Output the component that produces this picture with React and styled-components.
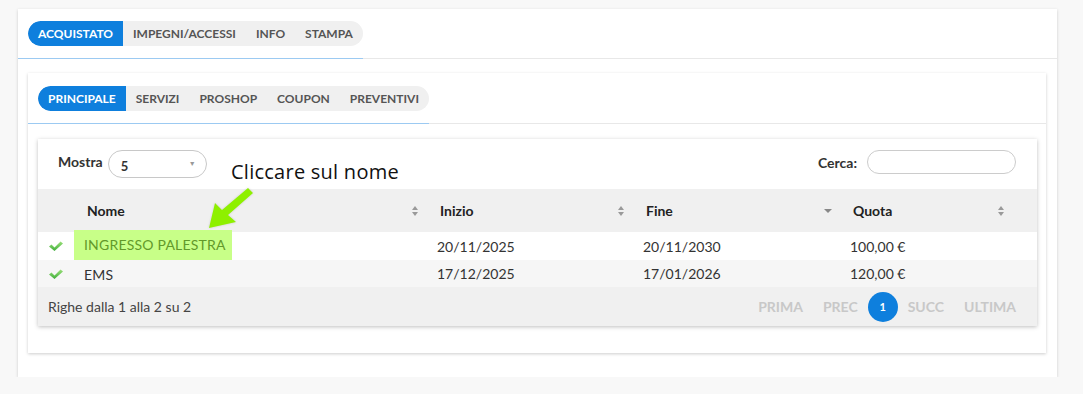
import React from 'react';
import styled, { createGlobalStyle } from 'styled-components';

const GlobalStyle = createGlobalStyle`
  body {
    margin: 0;
    background: #f8f8f8;
    font-family: Lato, "Open Sans", sans-serif;
    color: #333;
  }
`;

const rows = [
  { nome: 'INGRESSO PALESTRA', inizio: '20/11/2025', fine: '20/11/2030', quota: '100,00 €', hl: true },
  { nome: 'EMS', inizio: '17/12/2025', fine: '17/01/2026', quota: '120,00 €' },
];

function SortIcon({ dir }) {
  if (dir === 'desc') {
    return (
      <svg width="8" height="8" viewBox="0 0 8 8">
        <path d="M0 2h8L4 6z" fill="#888" />
      </svg>
    );
  }
  return (
    <svg width="8" height="12" viewBox="0 0 8 12">
      <path d="M1 5L4 1l3 4z" fill="#999" />
      <path d="M1 7l3 4 3-4z" fill="#999" />
    </svg>
  );
}

function Check() {
  return (
    <svg width="16" height="12" viewBox="0 0 16 12">
      <defs>
        <linearGradient id="cg" x1="0" y1="0" x2="0" y2="1">
          <stop offset="0" stopColor="#9be07a" />
          <stop offset="1" stopColor="#3fae3a" />
        </linearGradient>
      </defs>
      <path d="M1 6.5L3.5 4.5 6.5 7.5 12.5 1.5 15 3.5 6.5 11z" fill="url(#cg)" />
    </svg>
  );
}

export default function App() {
  return (
    <>
      <GlobalStyle />
      <Page>
        <OuterCard>
          <TabStrip>
            <TabHolder $pad="12px 0 12px 10px">
              <TabGroup>
                <Tab $active>ACQUISTATO</Tab>
                <Tab>IMPEGNI/ACCESSI</Tab>
                <Tab>INFO</Tab>
                <Tab>STAMPA</Tab>
              </TabGroup>
            </TabHolder>
          </TabStrip>
          <OuterBody>
            <InnerCard>
              <TabStrip>
                <TabHolder $pad="13px 0 12px 10px">
                  <TabGroup>
                    <Tab $active>PRINCIPALE</Tab>
                    <Tab>SERVIZI</Tab>
                    <Tab>PROSHOP</Tab>
                    <Tab>COUPON</Tab>
                    <Tab>PREVENTIVI</Tab>
                  </TabGroup>
                </TabHolder>
              </TabStrip>
              <InnerBody>
                <Panel>
                  <Controls>
                    <ShowLabel>
                      Mostra
                      <Select>
                        <span>5</span>
                        <Caret>▼</Caret>
                      </Select>
                    </ShowLabel>
                    <SearchLabel>
                      Cerca:
                      <SearchInput />
                    </SearchLabel>
                  </Controls>
                  <Note>
                    <NoteText>Cliccare sul nome</NoteText>
                    <NoteArrow width="50" height="45" viewBox="0 0 50 45">
                      <polygon
                        points="5,41 11,16 18,23 44,1 49,6 24,28 32,35"
                        fill="#8ef000"
                      />
                    </NoteArrow>
                  </Note>
                  <Table>
                    <colgroup>
                      <col style={{ width: 36 }} />
                      <col style={{ width: 356 }} />
                      <col style={{ width: 206 }} />
                      <col style={{ width: 207 }} />
                      <col />
                    </colgroup>
                    <thead>
                      <tr>
                        <Th />
                        <Th>
                          <HeadCell>Nome<SortIcon /></HeadCell>
                        </Th>
                        <Th>
                          <HeadCell>Inizio<SortIcon /></HeadCell>
                        </Th>
                        <Th>
                          <HeadCell>Fine<SortIcon dir="desc" /></HeadCell>
                        </Th>
                        <Th $last>
                          <HeadCell>Quota<SortIcon /></HeadCell>
                        </Th>
                      </tr>
                    </thead>
                    <tbody>
                      {rows.map((r, i) => (
                        <Tr key={r.nome} $odd={i % 2 === 1}>
                          <CheckCell><Check /></CheckCell>
                          <NameCell>
                            <Name $hl={r.hl}>{r.nome}</Name>
                          </NameCell>
                          <Td>{r.inizio}</Td>
                          <Td>{r.fine}</Td>
                          <Td>{r.quota}</Td>
                        </Tr>
                      ))}
                    </tbody>
                  </Table>
                  <Footer>
                    <Info>Righe dalla 1 alla 2 su 2</Info>
                    <Pager>
                      <PageBtn>PRIMA</PageBtn>
                      <PageBtn>PREC</PageBtn>
                      <PageNum>1</PageNum>
                      <PageBtn>SUCC</PageBtn>
                      <PageBtn>ULTIMA</PageBtn>
                    </Pager>
                  </Footer>
                </Panel>
              </InnerBody>
            </InnerCard>
          </OuterBody>
        </OuterCard>
      </Page>
    </>
  );
}

const Page = styled.div`
  padding: 9px 26px 0 18px;
`;

const OuterCard = styled.div`
  background: #fff;
  height: 368px;
  box-sizing: border-box;
  box-shadow: 0 1px 3px rgba(0, 0, 0, 0.18);
`;

const TabStrip = styled.div`
  display: flex;
  border-bottom: 1px solid #e8e8e8;
`;

const TabHolder = styled.div`
  padding: ${(p) => p.$pad};
  border-bottom: 1px solid #9ccaf2;
  margin-bottom: -1px;
`;

const TabGroup = styled.div`
  display: flex;
  height: 25px;
  background: #f0f0f0;
  border-radius: 13px;
  overflow: hidden;
`;

const Tab = styled.div`
  display: flex;
  align-items: center;
  padding: 0 10px;
  font-size: 12px;
  font-weight: 700;
  color: ${(p) => (p.$active ? '#fff' : '#555')};
  background: ${(p) => (p.$active ? '#0e7fdd' : 'transparent')};
  border-radius: ${(p) => (p.$active ? '13px 0 0 13px' : '0')};
`;

const OuterBody = styled.div`
  padding: 14px 11px 24px 10px;
`;

const InnerCard = styled.div`
  background: #fff;
  box-shadow: 0 1px 3px rgba(0, 0, 0, 0.2);
`;

const InnerBody = styled.div`
  padding: 15px 9px 27px 10px;
`;

const Panel = styled.div`
  position: relative;
  background: #fff;
  box-shadow: 0 1px 4px rgba(0, 0, 0, 0.25);
`;

const Controls = styled.div`
  display: flex;
  justify-content: space-between;
  align-items: flex-start;
  height: 50px;
  padding: 11px 21px 0 20px;
  box-sizing: border-box;
`;

const SearchLabel = styled.div`
  display: flex;
  align-items: center;
  gap: 10px;
  font-size: 14px;
  font-weight: 700;
  color: #333;
`;

const ShowLabel = styled.div`
  display: flex;
  align-items: flex-start;
  gap: 5px;
  font-size: 14px;
  font-weight: 700;
  color: #333;
  line-height: 24px;
`;

const Select = styled.div`
  width: 99px;
  height: 28px;
  box-sizing: border-box;
  border: 1px solid #c8c8c8;
  border-radius: 14px;
  display: flex;
  align-items: center;
  justify-content: space-between;
  padding: 3px 10px 0 12px;
  font-size: 13px;
  font-weight: 700;
  color: #333;
`;

const Caret = styled.span`
  font-size: 7px;
  color: #999;
  margin-top: -6px;
`;

const SearchInput = styled.div`
  width: 149px;
  height: 24px;
  box-sizing: border-box;
  border: 1px solid #ccc;
  border-radius: 12px;
`;

const Note = styled.div`
  position: absolute;
  left: 193px;
  top: 20px;
`;

const NoteText = styled.div`
  font-family: "Open Sans", "Noto Sans", sans-serif;
  font-size: 20px;
  letter-spacing: 0.25px;
  color: #111;
  line-height: 26px;
`;

const NoteArrow = styled.svg`
  position: absolute;
  left: -27px;
  top: 28px;
  filter: drop-shadow(0 0 1px rgba(0, 0, 0, 0.15));
`;

const Table = styled.table`
  width: 100%;
  border-collapse: collapse;
  table-layout: fixed;
`;

const Th = styled.th`
  height: 43px;
  background: #f0f0f0;
  padding: ${(p) => (p.$last ? '0 32px 0 10px' : '0 11px 0 10px')};
  text-align: left;
  font-size: 14px;
  font-weight: 700;
  color: #222;
  &:nth-child(2) {
    padding-left: 13px;
  }
`;

const HeadCell = styled.div`
  display: flex;
  justify-content: space-between;
  align-items: center;
`;

const Tr = styled.tr`
  background: ${(p) => (p.$odd ? '#f6f6f6' : '#fff')};
  height: ${(p) => (p.$odd ? '27px' : '28px')};
`;

const Td = styled.td`
  padding: 0 7px;
  font-size: 14px;
  color: #333;
  white-space: nowrap;
`;

const CheckCell = styled.td`
  padding: 0 0 0 10px;
  line-height: 0;
`;

const NameCell = styled.td`
  padding: 0;
`;

const Name = styled.span`
  display: inline-block;
  padding: ${(p) => (p.$hl ? '6px 6px 6px 10px' : '0 10px')};
  margin: ${(p) => (p.$hl ? '-4px 0 -2px' : '0')};
  background: ${(p) => (p.$hl ? '#c8ff88' : 'transparent')};
  color: ${(p) => (p.$hl ? '#62992a' : '#333')};
  font-size: 14px;
  letter-spacing: 0.2px;
  line-height: 18px;
`;

const Footer = styled.div`
  display: flex;
  justify-content: space-between;
  align-items: center;
  height: 39px;
  background: #f0f0f0;
  padding: 0 21px 0 10px;
`;

const Info = styled.div`
  font-size: 14px;
  color: #444;
`;

const Pager = styled.div`
  display: flex;
  align-items: center;
`;

const PageBtn = styled.div`
  padding: 0 10px;
  font-size: 14px;
  font-weight: 700;
  color: #c8c8c8;
  &:last-child {
    padding-right: 0;
  }
`;

const PageNum = styled.div`
  width: 30px;
  height: 30px;
  border-radius: 50%;
  background: #0e7fdd;
  color: #fff;
  font-size: 11px;
  font-weight: 700;
  display: flex;
  align-items: center;
  justify-content: center;
`;
